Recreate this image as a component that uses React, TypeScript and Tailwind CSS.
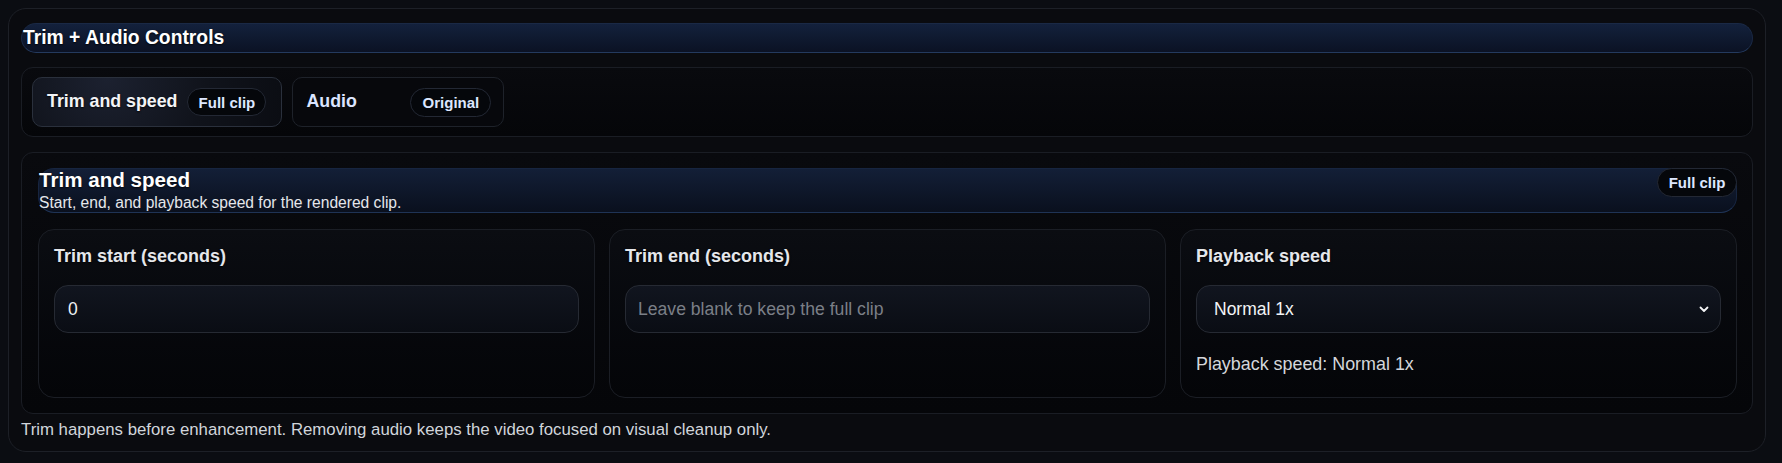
import React from "react";

function Badge({ children, className = "" }: { children: React.ReactNode; className?: string }) {
  return (
    <span
      className={
        "inline-flex items-center justify-center rounded-full border border-[#232834] bg-[#05070b] text-[15px] font-bold leading-none text-[#dde7ff] " +
        className
      }
    >
      {children}
    </span>
  );
}

function Card({ children }: { children: React.ReactNode }) {
  return (
    <div className="flex flex-col rounded-[16px] border border-[#1b1e25] bg-gradient-to-b from-[#0b0d12] to-[#040508] px-[15px] pt-[16px]">
      {children}
    </div>
  );
}

function Label({ children }: { children: React.ReactNode }) {
  return (
    <div className="text-[18px] font-bold leading-[21px] text-[#e5e7eb] [text-shadow:0_1px_2px_rgba(0,0,0,0.7)]">
      {children}
    </div>
  );
}

export default function App() {
  return (
    <div className="min-h-screen bg-[#0b0d12] pl-[8px] pt-[8px] font-['Liberation_Sans',Arial,sans-serif]">
      <div className="flex w-[1758px] flex-col rounded-[18px] border border-[#1d2027] bg-[#0a0b0f] px-[12px] pb-[12px] pt-[14px]">
        {/* Top header */}
        <div className="flex h-[30px] items-center rounded-full border border-[#1a2945] border-b-[#243a5e] bg-gradient-to-b from-[#13213c] to-[#0b1224] pl-[1px] pr-[13px]">
          <span className="text-[19.3px] font-bold leading-none text-white [text-shadow:0_1px_2px_rgba(0,0,0,0.8)]">
            Trim + Audio Controls
          </span>
        </div>

        {/* Tabs */}
        <div className="mt-[14px] flex h-[70px] items-center gap-[10px] rounded-[12px] border border-[#1a1d24] bg-gradient-to-b from-[#090a0e] to-[#050609] px-[10px]">
          <div className="flex h-[50px] items-center gap-[10px] rounded-[10px] border border-[#2a303c] bg-[radial-gradient(circle_at_30%_0%,#1c2130_0%,#10131b_55%,#0b0d13_100%)] pl-[14px] pr-[15px]">
            <span className="text-[17.8px] font-bold leading-none text-[#f3f4f6] [text-shadow:0_1px_2px_rgba(0,0,0,0.8)]">
              Trim and speed
            </span>
            <Badge className="h-[28px] w-[79px]">Full clip</Badge>
          </div>
          <div className="flex h-[50px] w-[212px] items-center justify-between rounded-[10px] border border-[#1e222a] bg-[#07080c] pl-[13px] pr-[12px]">
            <span className="text-[17.8px] font-bold leading-none text-[#dbe5ff]">Audio</span>
            <Badge className="h-[29px] w-[81px]">Original</Badge>
          </div>
        </div>

        {/* Section */}
        <div className="mt-[15px] flex flex-col rounded-[12px] border border-[#1a1d24] bg-gradient-to-b from-[#090a0e] to-[#050609] pb-[15px] pl-[16px] pr-[15px] pt-[15px]">
          <div className="flex h-[45px] items-start justify-between rounded-[16px] border border-[#172540] border-b-[#1f3355] bg-gradient-to-b from-[#131f37] to-[#0a101e]">
            <div className="flex flex-col">
              <span className="text-[20.6px] font-bold leading-[22px] text-white [text-shadow:0_1px_2px_rgba(0,0,0,0.8)]">
                Trim and speed
              </span>
              <span className="mt-[3px] text-[15.6px] leading-[18px] text-[#e5e7eb]">
                Start, end, and playback speed for the rendered clip.
              </span>
            </div>
            <Badge className="-mr-px -mt-px h-[29px] w-[80px]">Full clip</Badge>
          </div>

          <div className="mt-[16px] grid h-[169px] grid-cols-3 gap-[14px]">
            <Card>
              <Label>Trim start (seconds)</Label>
              <div className="mt-[18px] flex h-[48px] items-center rounded-[14px] border border-[#262a33] bg-gradient-to-b from-[#11151f] to-[#0a0d14] px-[13px] text-[17.5px] text-[#eef0f4]">
                0
              </div>
            </Card>
            <Card>
              <Label>Trim end (seconds)</Label>
              <div className="mt-[18px] flex h-[48px] items-center rounded-[14px] border border-[#262a33] bg-gradient-to-b from-[#11151f] to-[#0a0d14] px-[12px] text-[17.6px] text-[#7b7f87]">
                Leave blank to keep the full clip
              </div>
            </Card>
            <Card>
              <Label>Playback speed</Label>
              <div className="mt-[18px] flex h-[48px] items-center justify-between rounded-[14px] border border-[#262a33] bg-gradient-to-b from-[#11151f] to-[#0a0d14] pl-[17px] pr-[10px] text-[17.5px] text-[#f3f4f6]">
                <span>Normal 1x</span>
                <svg width="12" height="12" viewBox="0 0 12 12" fill="none">
                  <path d="M2.5 4.5 6 8 9.5 4.5" stroke="#f3f4f6" strokeWidth="1.8" strokeLinecap="round" strokeLinejoin="round" />
                </svg>
              </div>
              <div className="mt-[21px] text-[17.9px] leading-[20px] text-[#d4d6db]">
                Playback speed: Normal 1x
              </div>
            </Card>
          </div>
        </div>

        <p className="mt-[6px] text-[16.8px] leading-[19px] text-[#d1d5db]">
          Trim happens before enhancement. Removing audio keeps the video focused on visual cleanup only.
        </p>
      </div>
    </div>
  );
}
